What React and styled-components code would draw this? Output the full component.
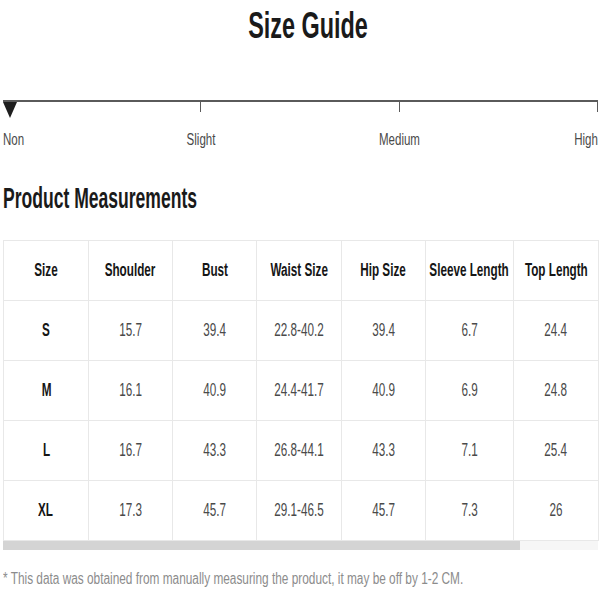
import styled, { createGlobalStyle } from 'styled-components'

const GlobalStyle = createGlobalStyle`
    body {
        margin: 0;
        background: #fff;
        font-family: "Liberation Sans", Arial, sans-serif;
    }
`

const columns = [
    { label: 'Size', width: 85 },
    { label: 'Shoulder', width: 84 },
    { label: 'Bust', width: 84 },
    { label: 'Waist Size', width: 85 },
    { label: 'Hip Size', width: 84 },
    { label: 'Sleeve Length', width: 88 },
    { label: 'Top Length', width: 85 },
]

const rows = [
    ['S', '15.7', '39.4', '22.8-40.2', '39.4', '6.7', '24.4'],
    ['M', '16.1', '40.9', '24.4-41.7', '40.9', '6.9', '24.8'],
    ['L', '16.7', '43.3', '26.8-44.1', '43.3', '7.1', '25.4'],
    ['XL', '17.3', '45.7', '29.1-46.5', '45.7', '7.3', '26'],
]

const App = () => {
    return (
        <Page>
            <GlobalStyle />
            <Title><Squash>Size Guide</Squash></Title>

            <Scale>
                <Line>
                    <Tick><Marker /></Tick>
                    <Tick />
                    <Tick />
                </Line>
                <Labels>
                    <Label $align="flex-start"><Squash $origin="left" $sx={0.72}>Non</Squash></Label>
                    <Label $span={2}><Squash $sx={0.72}>Slight</Squash></Label>
                    <Label $span={2}><Squash $sx={0.72}>Medium</Squash></Label>
                    <Label $align="flex-end"><Squash $origin="right" $sx={0.72}>High</Squash></Label>
                </Labels>
            </Scale>

            <Heading><Squash $origin="left" $sx={0.605}>Product Measurements</Squash></Heading>

            <Table>
                <colgroup>
                    {columns.map(c => <col key={c.label} style={{ width: c.width }} />)}
                </colgroup>
                <thead>
                    <tr>
                        {columns.map(c => (
                            <Th key={c.label}>
                                <CellInner><Squash>{c.label}</Squash></CellInner>
                            </Th>
                        ))}
                    </tr>
                </thead>
                <tbody>
                    {rows.map(r => (
                        <tr key={r[0]}>
                            {r.map((v, i) => (
                                <Td key={i} $strong={i === 0}>
                                    <CellInner><Squash>{v}</Squash></CellInner>
                                </Td>
                            ))}
                        </tr>
                    ))}
                </tbody>
            </Table>
            <Track>
                <Thumb />
            </Track>

            <Note><Squash $origin="left" $sx={0.74}>* This data was obtained from manually measuring the product, it may be off by 1-2 CM.</Squash></Note>
        </Page>
    )
}

const Page = styled.div`
    width: 600px;
    height: 600px;
    padding: 0 2px 0 3px;
    box-sizing: border-box;
    overflow: hidden;
`

const Squash = styled.span`
    display: inline-block;
    white-space: nowrap;
    transform: scaleX(${p => p.$sx || 0.65});
    transform-origin: ${p => p.$origin || 'center'};
`

const Title = styled.h1`
    margin: 6px 0 0;
    padding-left: 16px;
    text-align: center;
    font-size: 36px;
    line-height: 40px;
    font-weight: 700;
    color: #1a1a1a;
`

const Scale = styled.div`
    margin-top: 54px;
`

const Line = styled.div`
    display: grid;
    grid-template-columns: 1fr 1fr 1fr;
    border-top: 2px solid #5a5a5a;
    height: 10px;
`

const Tick = styled.div`
    position: relative;
    border-right: 1px solid #5a5a5a;
`

const Marker = styled.div`
    position: absolute;
    left: 0;
    top: 0;
    width: 0;
    height: 0;
    border-left: 7px solid transparent;
    border-right: 7px solid transparent;
    border-top: 16px solid #1e1e1e;
`

const Labels = styled.div`
    display: grid;
    grid-template-columns: repeat(6, 1fr);
    margin-top: 18px;
`

const Label = styled.div`
    grid-column: span ${p => p.$span || 1};
    display: flex;
    justify-content: ${p => p.$align || 'center'};
    font-size: 16px;
    line-height: 20px;
    color: #4a4a4a;
`

const Heading = styled.h2`
    margin: 31px 0 0;
    font-size: 29px;
    line-height: 34px;
    font-weight: 700;
    color: #1a1a1a;
`

const Table = styled.table`
    margin-top: 25px;
    width: 595px;
    table-layout: fixed;
    border-collapse: collapse;
    border: 1px solid #e8e8e8;
`

const CellInner = styled.div`
    display: flex;
    justify-content: center;
    align-items: center;
`

const Th = styled.th`
    height: 59px;
    padding: 0;
    border: 1px solid #e8e8e8;
    font-size: 18px;
    font-weight: 700;
    color: #161616;
`

const Td = styled.td`
    height: 59px;
    padding: 0;
    border: 1px solid #e8e8e8;
    font-size: 18px;
    font-weight: ${p => (p.$strong ? 700 : 400)};
    color: ${p => (p.$strong ? '#161616' : '#4a4a4a')};
`

const Track = styled.div`
    height: 9px;
    background: #f6f6f6;
`

const Thumb = styled.div`
    width: 517px;
    height: 100%;
    background: #d4d4d4;
`

const Note = styled.p`
    margin: 19px 0 0;
    font-size: 16px;
    line-height: 20px;
    color: #8c8c8c;
`

export default App
